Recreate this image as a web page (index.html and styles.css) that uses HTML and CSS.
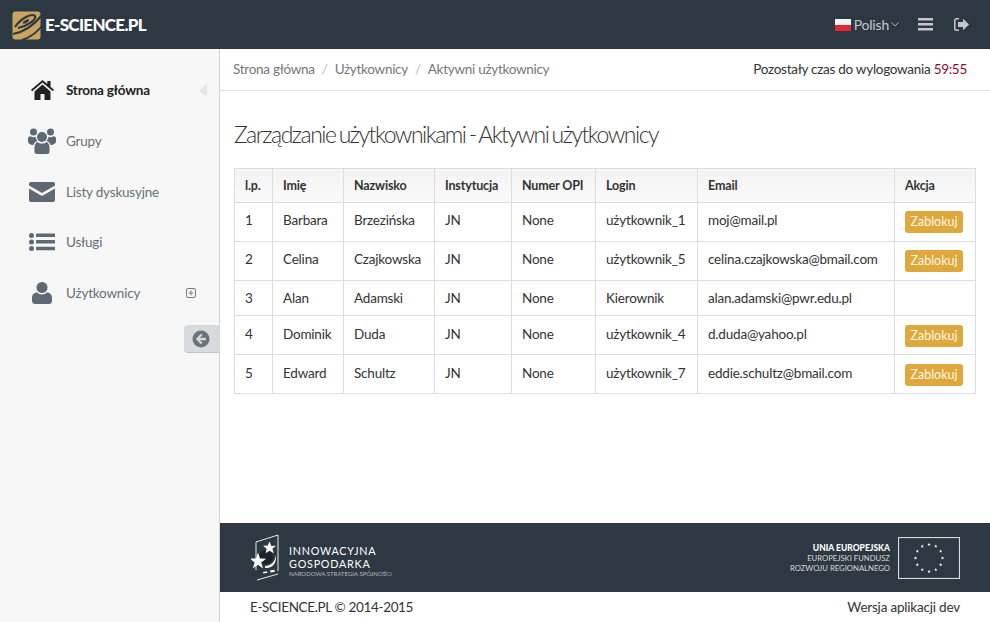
FILE: index.html
```html
<!DOCTYPE html>
<html lang="pl">
<head>
<meta charset="utf-8">
<title>E-SCIENCE.PL</title>
<link rel="stylesheet" href="styles.css">
</head>
<body>
<header class="topbar">
  <div class="brand">
    <svg class="brand-logo" width="29" height="29" viewBox="0 0 29 29">
      <rect x="0.500" y="0.500" width="28" height="28" rx="3" fill="#c9a35f"/>
      <g fill="none" stroke="#2e3843" stroke-linecap="butt">
        <path d="M1 23C12 21 22 14 30 4" stroke-width="2.200"/>
        <path d="M10 29C17 27 24 22 30 15" stroke-width="2"/>
        <path d="M3 16C9 7 20 2 23 5C25 9 13 16 6 17" stroke-width="2.200"/>
      </g>
      <ellipse cx="14" cy="10.500" rx="3.500" ry="1.300" transform="rotate(-30 14 10.500)" fill="#2e3843"/>
    </svg>
    <span class="brand-name">E-SCIENCE.PL</span>
  </div>
  <div class="top-actions">
    <span class="lang"><span class="flag"></span>Polish
      <svg class="chev" width="8" height="5" viewBox="0 0 8 5"><path d="M.5.5 4 4 7.500.5" fill="none" stroke="#a9b0b8" stroke-width="1"/></svg>
    </span>
    <svg class="bars" width="15" height="13" viewBox="0 0 15 13"><path d="M0 0h15v2.500H0zM0 5h15v2.500H0zM0 10h15v2.500H0z" fill="#c3c8cd"/></svg>
    <svg class="signout" width="15" height="13" viewBox="0 0 15 13"><path d="M5 0H2.500A2.500 2.500 0 0 0 0 2.500v8A2.500 2.500 0 0 0 2.500 13H5v-1.500H2.500a1 1 0 0 1-1-1v-8a1 1 0 0 1 1-1H5z" fill="#c3c8cd"/><path d="M4 4h5V.8l6 5.700-6 5.700V9H4z" fill="#c3c8cd"/></svg>
  </div>
</header>
<div class="shell">
  <aside class="sidebar">
    <nav class="menu">
      <a class="item active">
        <span class="ico"><svg width="23" height="20" viewBox="0 0 23 20"><path d="M11.500 0 0 9.700l1.200 1.500L11.500 2.600l10.300 8.600L23 9.700l-3.500-3V1h-3.200v3z" fill="#222"/><path d="M3.500 11.500 11.500 4.500l8 7V20h-6v-6h-4v6h-6z" fill="#222"/></svg></span>
        <span class="label">Strona główna</span>
        <svg class="collapse" width="8" height="13" viewBox="0 0 8 13"><path d="M8 0v13L0 6.500z" fill="#e6e7e8"/></svg>
      </a>
      <a class="item">
        <span class="ico"><svg width="28" height="26" viewBox="0 0 28 26"><g fill="#5e6973"><circle cx="5.500" cy="4" r="3.500"/><circle cx="22.500" cy="4" r="3.500"/><circle cx="14" cy="9" r="5"/><path d="M0 10.500C0 8.500 2 8 3 8.500c1 1 3.500 1 4.500.3C7.500 10 8.500 12 9.500 13 7.500 13.500 6 15 5.500 17 2 17 0 15 0 13.500zM28 10.500C28 8.500 26 8 25 8.500c-1 1-3.500 1-4.500.3 0 1.200-1 3.200-2 4.200 2 .5 3.500 2 4 4 3.500 0 5.500-2 5.500-3.500zM6.500 19.500C6.500 16 8 14.500 9.500 14c2 2 7 2 9 0 1.500.5 3 2 3 5.500V24c0 1.300-1 2-2.500 2H9c-1.500 0-2.500-.7-2.500-2z"/></g></svg></span>
        <span class="label">Grupy</span>
      </a>
      <a class="item">
        <span class="ico"><svg width="26" height="20" viewBox="0 0 26 20"><path d="M0 2C0 .8.800 0 2 0h22c1.200 0 2 .8 2 2v1.500L13 11 0 3.500z" fill="#5e6973"/><path d="M0 6.500 13 14 26 6.500V18c0 1.200-.8 2-2 2H2c-1.200 0-2-.8-2-2z" fill="#5e6973"/></svg></span>
        <span class="label">Listy dyskusyjne</span>
      </a>
      <a class="item">
        <span class="ico"><svg width="26" height="18" viewBox="0 0 26 18"><g fill="#5e6973"><circle cx="2.500" cy="2.500" r="2.500"/><circle cx="2.500" cy="9" r="2.500"/><circle cx="2.500" cy="15.500" r="2.500"/><rect x="7" y="0.500" width="19" height="3.500" rx=".5"/><rect x="7" y="7" width="19" height="3.500" rx=".5"/><rect x="7" y="13.800" width="19" height="3.500" rx=".5"/></g></svg></span>
        <span class="label">Usługi</span>
      </a>
      <a class="item">
        <span class="ico"><svg width="20" height="22" viewBox="0 0 20 22"><g fill="#5e6973"><circle cx="10" cy="5.500" r="5.500"/><path d="M0 15.500C0 12.500 2.500 10.500 5 10.500c2.500 2.500 7.500 2.500 10 0 2.500 0 5 2 5 5V19c0 2-1.500 3-3 3H3c-1.500 0-3-1-3-3z"/></g></svg></span>
        <span class="label">Użytkownicy</span>
        <svg class="expand" width="10" height="10" viewBox="0 0 10 10"><rect x=".5" y=".5" width="9" height="9" rx="1.500" fill="none" stroke="#747c84"/><path d="M5 2.500v5M2.500 5h5" stroke="#747c84"/></svg>
      </a>
    </nav>
    <div class="toggle-row">
      <div class="toggle">
        <svg width="18" height="18" viewBox="0 0 18 18"><circle cx="9" cy="9" r="8.500" fill="#6b737b"/><path d="M9 3.800 3.800 9 9 14.200l1.500-1.500-2.600-2.500h6V7.800h-6l2.600-2.500z" fill="#d6d9dc"/></svg>
      </div>
    </div>
  </aside>
  <div class="main">
    <div class="crumbs">
      <ol class="path">
        <li>Strona główna</li>
        <li class="sep">/</li>
        <li>Użytkownicy</li>
        <li class="sep">/</li>
        <li>Aktywni użytkownicy</li>
      </ol>
      <div class="timer">Pozostały czas do wylogowania <span class="time">59:55</span></div>
    </div>
    <section class="content">
      <h1 class="title">Zarządzanie użytkownikami - Aktywni użytkownicy</h1>
      <table class="users">
        <colgroup>
          <col class="c1"><col class="c2"><col class="c3"><col class="c4"><col class="c5"><col class="c6"><col class="c7"><col class="c8">
        </colgroup>
        <thead>
          <tr><th>l.p.</th><th>Imię</th><th>Nazwisko</th><th>Instytucja</th><th>Numer OPI</th><th>Login</th><th>Email</th><th>Akcja</th></tr>
        </thead>
        <tbody>
          <tr class="tall"><td>1</td><td>Barbara</td><td>Brzezińska</td><td>JN</td><td>None</td><td>użytkownik_1</td><td>moj@mail.pl</td><td><span class="btn">Zablokuj</span></td></tr>
          <tr class="tall"><td>2</td><td>Celina</td><td>Czajkowska</td><td>JN</td><td>None</td><td>użytkownik_5</td><td>celina.czajkowska@bmail.com</td><td><span class="btn">Zablokuj</span></td></tr>
          <tr class="short"><td>3</td><td>Alan</td><td>Adamski</td><td>JN</td><td>None</td><td>Kierownik</td><td>alan.adamski@pwr.edu.pl</td><td></td></tr>
          <tr class="tall low"><td>4</td><td>Dominik</td><td>Duda</td><td>JN</td><td>None</td><td>użytkownik_4</td><td>d.duda@yahoo.pl</td><td><span class="btn">Zablokuj</span></td></tr>
          <tr class="tall low"><td>5</td><td>Edward</td><td>Schultz</td><td>JN</td><td>None</td><td>użytkownik_7</td><td>eddie.schultz@bmail.com</td><td><span class="btn">Zablokuj</span></td></tr>
        </tbody>
      </table>
    </section>
    <div class="partners">
      <div class="ig">
        <svg width="28" height="47" viewBox="0 0 28 47">
          <path d="M5 8 27 1V37M5 8V36" fill="none" stroke="#e8eaec" stroke-width="1"/>
          <path d="M6 46 27 40" fill="none" stroke="#e8eaec" stroke-width="1"/>
          <circle cx="15" cy="23" r="7" fill="#1c2228"/>
          <g fill="#fff">
            <path d="M18.500 7.500l1.800 4.500 4.700-.3-3.600 3 1.300 4.500-4.100-2.500-4 2.600 1.100-4.600-3.700-2.900 4.800-.4z"/>
            <path d="M7 18.500l2 6 6.200.2-5 3.700 1.800 6-5-3.600-5.200 3.500 1.900-5.900-5-3.800 6.300-.1z"/>
            <path d="M14 32c6 0 10-4 11-11 1 8-4 14-11 13z"/>
            <path d="M12 38l4-.7.500 1.500-4.200.8zM19 36.500l4-.8 1 2-4.500.8z"/>
          </g>
        </svg>
        <div class="ig-text">
          <div class="ig-big">INNOWACYJNA</div>
          <div class="ig-big">GOSPODARKA</div>
          <div class="ig-small">NARODOWA STRATEGIA SPÓJNOŚCI</div>
        </div>
      </div>
      <div class="eu">
        <div class="eu-text">
          <div class="eu-bold">UNIA EUROPEJSKA</div>
          <div>EUROPEJSKI FUNDUSZ</div>
          <div>ROZWOJU REGIONALNEGO</div>
        </div>
        <svg class="eu-flag" width="62" height="42" viewBox="0 0 62 42">
          <defs><path id="eustar" d="M0-1.700.5-.5 1.700-.5.700.2 1.100 1.400 0 .7-1.100 1.400-.7.2-1.700-.5-.5-.5z" fill="#fff"/></defs>
          <rect x=".5" y=".5" width="61" height="41" fill="none" stroke="#d8dbde" stroke-width="1.200"/>
          <use href="#eustar" x="31" y="7.500"/><use href="#eustar" x="37.800" y="9.300"/><use href="#eustar" x="42.700" y="14.200"/><use href="#eustar" x="44.500" y="21"/><use href="#eustar" x="42.700" y="27.800"/><use href="#eustar" x="37.800" y="32.700"/><use href="#eustar" x="31" y="34.500"/><use href="#eustar" x="24.200" y="32.700"/><use href="#eustar" x="19.300" y="27.800"/><use href="#eustar" x="17.500" y="21"/><use href="#eustar" x="19.300" y="14.200"/><use href="#eustar" x="24.200" y="9.300"/>
        </svg>
      </div>
    </div>
    <footer class="foot">
      <span class="foot-left">E-SCIENCE.PL © 2014-2015</span>
      <span>Wersja aplikacji dev</span>
    </footer>
  </div>
</div>
</body>
</html>
```

FILE: styles.css
```css
* { box-sizing: border-box; }
html, body { margin: 0; height: 100%; }
body {
  font-family: Lato, "Open Sans", sans-serif;
  font-size: 13.500px;
  letter-spacing: -.2px;
  color: #333;
  background: #fff;
  overflow: hidden;
}
.topbar {
  height: 49px;
  background: #2e3843;
  display: flex;
  align-items: center;
  justify-content: space-between;
  padding: 0 21px 0 12px;
}
.brand { display: flex; align-items: center; gap: 4px; }
.brand-logo { display: block; margin-top: 1px; }
.brand-name { color: #fff; font-weight: 900; font-size: 17px; letter-spacing: -.7px; }
.top-actions { display: flex; align-items: center; }
.lang { display: flex; align-items: center; color: #c3c8cd; font-size: 14px; font-weight: 400; margin-right: 19px; letter-spacing: -.2px; }
.flag {
  width: 16px; height: 12px; margin-right: 3px;
  background: linear-gradient(#f4f4f4 0 50%, #e22636 50% 100%);
}
.chev { margin-left: 2px; }
.bars { display: block; margin-right: 21px; }
.signout { display: block; }
.shell { display: flex; height: 573px; }
.sidebar {
  width: 220px;
  flex: none;
  background: #f7f7f7;
  border-right: 1px solid #d4d4d4;
  padding-top: 16px;
}
.menu { display: flex; flex-direction: column; }
.item {
  height: 50.700px;
  display: flex;
  align-items: center;
  position: relative;
  color: #666f78;
}
.item.active { color: #222; font-weight: 700; letter-spacing: -.25px; }
.ico { width: 66px; flex: none; display: flex; justify-content: center; padding-left: 22px; padding-right: 4px; }
.ico svg { display: block; }
.collapse { position: absolute; right: 12px; top: 19px; }
.expand { position: absolute; left: 186px; top: 20px; }
.toggle-row { display: flex; justify-content: flex-end; margin-top: 7px; }
.toggle {
  width: 35px; height: 28px;
  background: #d8dbde;
  border-radius: 4px 0 0 4px;
  border-bottom: 1px solid #bfc2c5;
  display: flex; align-items: center; padding-left: 8px;
}
.toggle svg { display: block; }
.main { flex: 1; min-width: 0; display: flex; flex-direction: column; }
.crumbs {
  height: 42px;
  flex: none;
  border-bottom: 1px solid #e3e3e3;
  display: flex;
  align-items: center;
  justify-content: space-between;
  padding: 0 23px 2px 13px;
}
.path { display: flex; gap: 7px; list-style: none; margin: 0; padding: 0; color: #777; letter-spacing: -.28px; }
.path .sep { color: #bbb; }
.timer { color: #333; letter-spacing: -.27px; }
.time { color: #8a0a2e; }
.content { flex: 1; padding: 29px 14px 0 14px; }
.title {
  margin: 0 0 20px;
  font-size: 23px;
  font-weight: 300;
  line-height: 28px;
  color: #333;
  letter-spacing: -1.500px;
  word-spacing: -1.500px;
}
.users {
  width: 741px;
  table-layout: fixed;
  border-collapse: collapse;
  color: #333;
}
.c1 { width: 38px; } .c2 { width: 71px; } .c3 { width: 91px; } .c4 { width: 77px; }
.c5 { width: 84px; } .c6 { width: 102px; } .c7 { width: 197px; } .c8 { width: 81px; }
.users th, .users td { border: 1px solid #ddd; padding: 0 0 0 10px; text-align: left; white-space: nowrap; }
.users th {
  height: 34px;
  padding-bottom: 1px;
  font-size: 12.500px;
  font-weight: 700;
  letter-spacing: -.15px;
  background: linear-gradient(#f3f3f3, #fafafa);
}
.users .tall td { height: 39px; padding-bottom: 5px; }
.users .tall.low td { padding-bottom: 3px; }
.users .short td { height: 35px; padding-bottom: 1px; }
.btn {
  display: inline-block;
  width: 58px; height: 22px;
  margin-top: 5px;
  background: #dfa83c;
  color: #fdf6e6;
  border-radius: 3px;
  font-size: 12.500px;
  letter-spacing: 0;
  line-height: 22px;
  text-align: center;
  vertical-align: middle;
}
.low .btn { margin-top: 4px; }
.partners {
  height: 69px;
  flex: none;
  background: #2e3843;
  display: flex;
  align-items: center;
  justify-content: space-between;
  padding: 0 30px 0 31px;
  color: #fff;
  letter-spacing: 0;
}
.ig { display: flex; align-items: center; gap: 10px; }
.ig svg { display: block; }
.ig-text { padding-top: 7px; }
.ig-big { font-size: 10.800px; line-height: 13px; font-weight: 400; letter-spacing: .75px; }
.ig-small { font-size: 6px; line-height: 8px; color: #b8bdc2; }
.eu { display: flex; align-items: center; gap: 8px; }
.eu-text { text-align: right; font-size: 7.700px; line-height: 10px; color: #d5d8db; }
.eu-bold { font-weight: 900; color: #fff; font-size: 8.500px; }
.eu-flag { display: block; }
.foot {
  height: 30px;
  flex: none;
  display: flex;
  align-items: center;
  justify-content: space-between;
  padding: 0 30px 0 30px;
  color: #333;
}
.foot-left { letter-spacing: -.35px; }
```
